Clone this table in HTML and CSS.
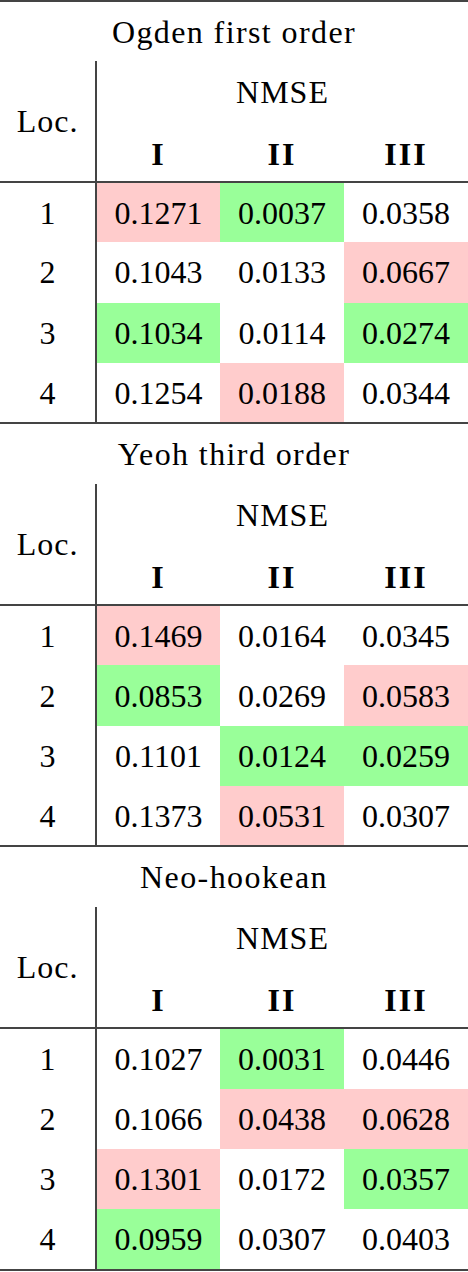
FILE: index.html
```html
<!DOCTYPE html>
<html lang="en">
<head>
    <meta charset="UTF-8">
    <meta name="viewport" content="width=device-width, initial-scale=1.0">
    <title>NMSE per model</title>
    <link rel="stylesheet" href="styles.css">
</head>
<body>
    <div class="page">
        <table class="fit first">
            <colgroup><col class="c-loc"><col><col><col></colgroup>
            <tr class="title"><th colspan="4">Ogden first order</th></tr>
            <tr class="group"><th rowspan="2" class="loc">Loc.</th><th colspan="3">NMSE</th></tr>
            <tr class="cols"><th>I</th><th>II</th><th>III</th></tr>
            <tr><td class="loc">1</td><td class="worst">0.1271</td><td class="best">0.0037</td><td>0.0358</td></tr>
            <tr><td class="loc">2</td><td>0.1043</td><td>0.0133</td><td class="worst">0.0667</td></tr>
            <tr><td class="loc">3</td><td class="best">0.1034</td><td>0.0114</td><td class="best">0.0274</td></tr>
            <tr><td class="loc">4</td><td>0.1254</td><td class="worst">0.0188</td><td>0.0344</td></tr>
        </table>

        <table class="fit">
            <colgroup><col class="c-loc"><col><col><col></colgroup>
            <tr class="title"><th colspan="4">Yeoh third order</th></tr>
            <tr class="group"><th rowspan="2" class="loc">Loc.</th><th colspan="3">NMSE</th></tr>
            <tr class="cols"><th>I</th><th>II</th><th>III</th></tr>
            <tr><td class="loc">1</td><td class="worst">0.1469</td><td>0.0164</td><td>0.0345</td></tr>
            <tr><td class="loc">2</td><td class="best">0.0853</td><td>0.0269</td><td class="worst">0.0583</td></tr>
            <tr><td class="loc">3</td><td>0.1101</td><td class="best">0.0124</td><td class="best">0.0259</td></tr>
            <tr><td class="loc">4</td><td>0.1373</td><td class="worst">0.0531</td><td>0.0307</td></tr>
        </table>

        <table class="fit">
            <colgroup><col class="c-loc"><col><col><col></colgroup>
            <tr class="title"><th colspan="4">Neo-hookean</th></tr>
            <tr class="group"><th rowspan="2" class="loc">Loc.</th><th colspan="3">NMSE</th></tr>
            <tr class="cols"><th>I</th><th>II</th><th>III</th></tr>
            <tr><td class="loc">1</td><td>0.1027</td><td class="best">0.0031</td><td>0.0446</td></tr>
            <tr><td class="loc">2</td><td>0.1066</td><td class="worst">0.0438</td><td class="worst">0.0628</td></tr>
            <tr><td class="loc">3</td><td class="worst">0.1301</td><td>0.0172</td><td class="best">0.0357</td></tr>
            <tr><td class="loc">4</td><td class="best">0.0959</td><td>0.0307</td><td>0.0403</td></tr>
        </table>
    </div>
</body>
</html>
```

FILE: styles.css
```css
body {
    margin: 0;
    background: #fff;
    color: #000;
    font-family: "Liberation Serif", "DejaVu Serif", serif;
    font-size: 32px;
}
.page {
    width: 468px;
}
.fit {
    width: 468px;
    table-layout: fixed;
    border-collapse: collapse;
    border-bottom: 2px solid #444;
    font-family: "Liberation Serif", "DejaVu Serif", serif;
}
.fit.first {
    border-top: 2px solid #444;
}
.c-loc {
    width: 96px;
}
th, td {
    padding: 0;
    text-align: center;
    vertical-align: middle;
    line-height: 1;
    font-weight: normal;
    font-family: inherit;
}
th {
    letter-spacing: 1px;
}
.title {
    height: 60px;
}
.title th {
    letter-spacing: 1.4px;
}
.group {
    height: 61px;
}
.cols {
    height: 60px;
    border-bottom: 2px solid #444;
}
.cols th {
    font-weight: bold;
    padding-top: 4px;
    letter-spacing: 2px;
}
tr {
    height: 60.3px;
}
.loc {
    border-right: 2px solid #444;
}
.best {
    background-color: #99ff99;
}
.worst {
    background-color: #ffcccc;
}
```
